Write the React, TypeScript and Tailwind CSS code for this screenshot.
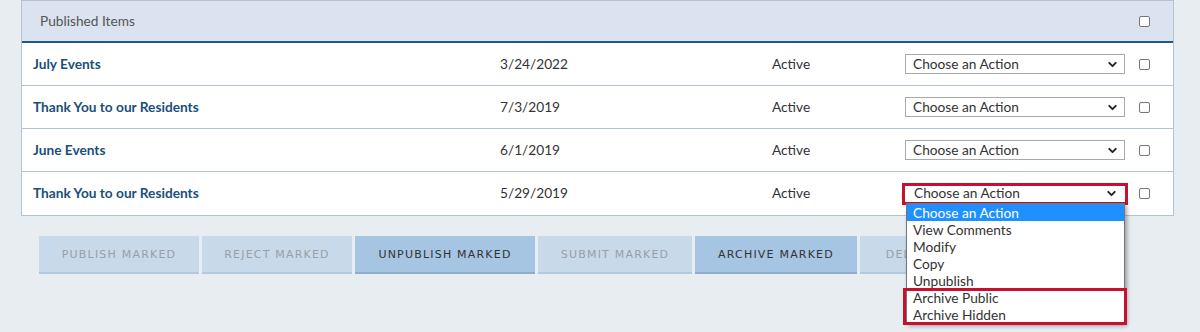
import { ChevronDown } from "lucide-react";

const items = [
  { title: "July Events", date: "3/24/2022" },
  { title: "Thank You to our Residents", date: "7/3/2019" },
  { title: "June Events", date: "6/1/2019" },
  { title: "Thank You to our Residents", date: "5/29/2019" },
];

const options = ["View Comments", "Modify", "Copy", "Unpublish", "Archive Public", "Archive Hidden"];

const buttons = [
  { label: "PUBLISH MARKED", w: "w-[160px]", on: false },
  { label: "REJECT MARKED", w: "w-[150px]", on: false },
  { label: "UNPUBLISH MARKED", w: "w-[180px]", on: true },
  { label: "SUBMIT MARKED", w: "w-[154px]", on: false },
  { label: "ARCHIVE MARKED", w: "w-[162px]", on: true },
  { label: "DELETE MARKED", w: "w-[160px]", on: false },
];

const Checkbox = () => (
  <span className="block w-[11px] h-[11px] rounded-[2px] border border-[#767676] bg-white" />
);

function ActionSelect({ open }: { open?: boolean }) {
  return (
    <div className="relative w-[220px]">
      <div
        className={
          open
            ? "flex items-center h-[22px] -mx-[3px] -my-[1px] pl-[9px] pr-[7px] border-[3px] border-[#c8102e] bg-white"
            : "flex items-center h-[20px] pl-[7px] pr-[5px] border border-[#a9a9a9] bg-white"
        }
      >
        <span className="flex-1 text-[13.7px] text-[#333]">Choose an Action</span>
        <ChevronDown className="w-[13px] h-[13px] text-[#222]" strokeWidth={3.5} />
      </div>
      {open && (
        <div className="absolute z-10 left-[1px] top-[19px] w-[219px] bg-white border border-[#767676] shadow-[2px_2px_4px_rgba(0,0,0,0.35)] text-[13.7px] leading-[17px] text-[#333]">
          <div className="pl-[6px] bg-[#1e90ff] text-white">Choose an Action</div>
          {options.map((o) => (
            <div key={o} className="pl-[6px]">{o}</div>
          ))}
          <div className="absolute -left-[4px] -right-[3px] bottom-[-2px] h-[37px] border-[3px] border-[#c8102e]" />
        </div>
      )}
    </div>
  );
}

export default function App() {
  return (
    <div className="w-full h-[332px] overflow-hidden bg-[#e8edf2] pl-[21px] pr-[26px] font-['Lato',sans-serif]">
      <div className="border border-t-0 border-[#b4c3d3] bg-white">
        <div className="flex items-center h-[43px] pl-[18px] pr-[23px] pt-[1px] bg-[#dae3ef] border-t border-b-2 border-[#b4c3d3] border-b-[#1a5a8a]">
          <span className="flex-1 text-[13.7px] text-[#555]">Published Items</span>
          <Checkbox />
        </div>
        {items.map((it, i) => (
          <div
            key={i}
            className="flex items-center h-[43px] pl-[11px] border-b last:border-b-0 border-[#b4c3d3]"
          >
            <span className="w-[467px] text-[13.7px] font-bold text-[#1a4f7a]">{it.title}</span>
            <span className="w-[272px] text-[13.7px] text-[#333]">{it.date}</span>
            <span className="w-[133px] text-[13.7px] text-[#333]">Active</span>
            <ActionSelect open={i === 3} />
            <div className="ml-[14px]">
              <Checkbox />
            </div>
          </div>
        ))}
      </div>
      <div className="flex gap-[3px] mt-[20px] ml-[18px]">
        {buttons.map((b) => (
          <button
            key={b.label}
            className={`${b.w} shrink-0 h-[38px] pt-[3px] border-b-2 text-[11px] tracking-[1.2px] font-['DejaVu_Sans',sans-serif] ${
              b.on
                ? "bg-[#a6c5e2] border-[#8eaccc] text-[#333]"
                : "bg-[#c8d9ea] border-[#b3c9de] text-[#9a9fa6]"
            }`}
          >
            {b.label}
          </button>
        ))}
      </div>
    </div>
  );
}
